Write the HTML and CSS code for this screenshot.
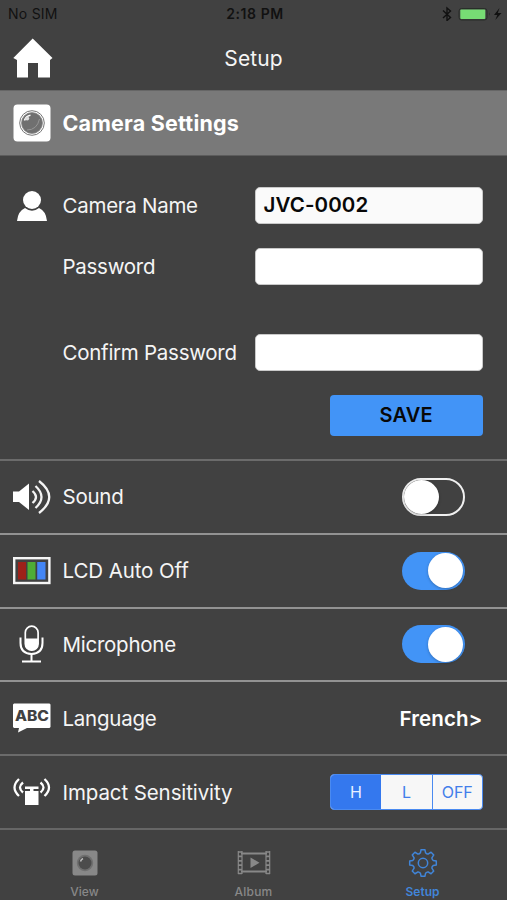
FILE: index.html
```html
<!DOCTYPE html>
<html lang="en">
<head>
<meta charset="utf-8">
<title>Setup</title>
<link rel="stylesheet" href="styles.css">
</head>
<body>
<div class="app">
  <div class="status">
    <span class="carrier">No SIM</span>
    <span class="time">2:18 PM</span>
    <span class="indicators">
      <svg width="64" height="20" viewBox="0 0 64 20">
        <path d="M3 9.500 L10.500 16.500 L7 19.500 V7 L10.500 10 L3 17" fill="none" stroke="#111" stroke-width="1.400"/>
        <rect x="19" y="7.500" width="28" height="11.500" rx="2.500" fill="none" stroke="#292d29" stroke-width="1"/>
        <rect x="20.300" y="8.500" width="25" height="9.500" rx="1" fill="#77dc74"/>
        <path d="M49 11.500 q1.500 1.500 0 3z" fill="#292929"/>
        <path d="M59.500 7 L54 14 h3.300 L55.300 19 L61.500 12 h-3.700z" fill="#111"/>
      </svg>
    </span>
  </div>
  <header class="nav">
    <svg class="home" width="40" height="40" viewBox="0 0 40 40"><path d="M19.700 .5 L39.500 20 L37 22 V39.500 H25 V25 H15 V39.500 H4 V22 L.3 20z" fill="#fff"/></svg>
    <h1>Setup</h1>
  </header>
  <div class="section">
    <svg class="icon" width="38" height="38" viewBox="0 0 38 38">
      <rect x=".5" y=".5" width="37" height="37" rx="4" fill="#fff"/>
      <circle cx="19" cy="19" r="12.300" fill="none" stroke="#777" stroke-width="1"/>
      <circle cx="19" cy="19" r="10.500" fill="#707070" stroke="#888" stroke-width=".7"/>
      <path d="M11.500 16.500 Q13 12 17.500 11.300" fill="none" stroke="#fff" stroke-width="1.600"/>
      <circle cx="14.200" cy="14.500" r="2" fill="#ddd"/>
      <path d="M14 26 Q24 26 26.500 15" fill="none" stroke="#969696" stroke-width="1"/>
    </svg>
    <h2>Camera Settings</h2>
  </div>
  <form class="camera">
    <div class="field name">
      <svg class="icon" width="38" height="32" viewBox="0 0 38 32"><circle cx="19" cy="10" r="9" fill="#fff"/><path d="M4 31 Q5 21 12 18 Q19 23.500 26 18 Q33 21 34 31z" fill="#fff"/></svg>
      <label>Camera Name</label><span class="input filled">JVC-0002</span>
    </div>
    <div class="field password"><label>Password</label><span class="input"></span></div>
    <div class="field confirm"><label>Confirm Password</label><span class="input"></span></div>
    <button type="button" class="save">SAVE</button>
  </form>
  <div class="row dim">
    <svg class="icon" width="38" height="36" viewBox="0 0 38 36"><path d="M0 12.500 H6 L16 4.500 V31 L6 23 H0z" fill="#fff"/><g fill="none" stroke="#f4f4f4" stroke-width="2.300"><path d="M19.500 12 Q26.500 18 19.500 24"/><path d="M22.500 7 Q34.500 18 22.500 29"/><path d="M26 2 Q46.500 18 26 34"/></g></svg>
    <span class="label sound">Sound</span><span class="switch off"></span>
  </div>
  <div class="row">
    <svg class="icon" width="38" height="28" viewBox="0 0 38 28"><rect x="1.200" y="1.200" width="35.200" height="24.800" fill="#414141" stroke="#f5f5f5" stroke-width="2.400"/><path d="M5 5h8v17.500H5z" fill="#9d2119"/><path d="M14.500 5h8v17.500h-8z" fill="#4ead35"/><path d="M24.200 5h8.300v17.500h-8.300z" fill="#4285f5"/></svg>
    <span class="label lcd">LCD Auto Off</span><span class="switch"></span>
  </div>
  <div class="row">
    <svg class="icon" width="38" height="38" viewBox="0 0 38 38"><g fill="none" stroke="#fff" stroke-width="2"><path d="M7.500 12.500 V18 Q7.500 28.500 18.500 29 Q29.500 28.500 29.500 18 V12.500"/><path d="M18.500 29v7M9 36.400h19"/><rect x="12.300" y="1.200" width="12.800" height="24" rx="6.400" stroke-width="1.700"/></g><path d="M12 13.500h13.400v5.300a6.700 6.700 0 0 1-13.400 0z" fill="#fff"/></svg>
    <span class="label mic">Microphone</span><span class="switch"></span>
  </div>
  <div class="row">
    <svg class="icon" width="38" height="30" viewBox="0 0 38 30"><path d="M1 .5H36.500L37.500 1.500V24L36.500 25H14L5 29.500 6 25H1L0 24V1.500z" fill="#fff"/><text x="18.900" y="18" text-anchor="middle" textLength="34" lengthAdjust="spacingAndGlyphs" class="abc">ABC</text></svg>
    <span class="label language">Language</span><span class="value">French&gt;</span>
  </div>
  <div class="row dim">
    <svg class="icon" width="38" height="28" viewBox="0 0 38 28"><g fill="none" stroke="#fff" stroke-width="2.300"><path d="M6 1 Q-3 9.500 6 18M10 4.500 Q4 9.500 10 14.500M31.500 1 Q40.500 9.500 31.500 18M27.500 4.500 Q33.500 9.500 27.500 14.500"/></g><path d="M12 8.500H25.500v2.500h-5V13h5v14H12V13h5v-2h-5z" fill="#fff"/></svg>
    <span class="label impact">Impact Sensitivity</span>
    <span class="segments"><span class="on">H</span><span>L</span><span>OFF</span></span>
  </div>
  <nav class="tabs">
    <span class="tab">
      <svg width="28" height="28" viewBox="0 0 28 28"><rect x="1.500" y="1.500" width="25" height="25" rx="2.500" fill="#888"/><circle cx="14" cy="14" r="8.200" fill="#707070"/><circle cx="14" cy="14" r="6.500" fill="#4c4c4c"/><path d="M9.500 12.500 Q10 10.500 12 9.500" fill="none" stroke="#bbb" stroke-width="1.500"/></svg>
      <span class="view">View</span></span>
    <span class="tab">
      <svg width="34" height="28" viewBox="0 0 34 28"><g fill="none" stroke="#888"><path d="M4 4.500h26M4 22.500h26" stroke-width="2"/><path d="M1.300 2v23M32.700 2v23M5 2v23M29 2v23" stroke-width="1.200"/><path d="M1 3h4M1 7.400h4M1 11.800h4M1 16.200h4M1 20.600h4M1 24.500h4M29 3h4M29 7.400h4M29 11.800h4M29 16.200h4M29 20.600h4M29 24.500h4" stroke-width="1.700"/></g><path d="M13.500 8.500L22.500 13.700 13.500 19z" fill="#888"/></svg>
      <span class="album">Album</span></span>
    <span class="tab active">
      <svg width="30" height="28" viewBox="-15 -14 30 28"><g fill="none" stroke="#4185d8" stroke-width="1.500" stroke-linejoin="round"><path d="M-2.600-10.200L-1.900-13.300H1.900L2.600-10.200Q4-8.500 5.400-9.050L8.060-10.750 10.750-8.060 9.050-5.400Q8.500-4 10.200-2.600L13.300-1.900V1.900L10.200 2.600Q8.500 4 9.050 5.400L10.750 8.060 8.060 10.750 5.400 9.050Q4 8.500 2.600 10.200L1.900 13.300H-1.900L-2.600 10.200Q-4 8.500-5.400 9.050L-8.060 10.750-10.750 8.060-9.050 5.400Q-8.500 4-10.200 2.600L-13.300 1.900V-1.900L-10.200-2.600Q-8.500-4-9.050-5.400L-10.750-8.060-8.060-10.750-5.400-9.050Q-4-8.500-2.600-10.200z"/><circle r="4.700"/></g></svg>
      <span class="setup">Setup</span></span>
  </nav>
</div>
</body>
</html>
```

FILE: styles.css
```css
* { box-sizing: border-box; }
body { margin: 0; background: #414141; color: #f5f5f5; font-family: Inter, "Liberation Sans", sans-serif; }
.app { width: 507px; height: 900px; overflow: hidden; display: flex; flex-direction: column; background: #414141; }
.app > * { flex-shrink: 0; }
svg { display: block; flex-shrink: 0; }

.status { height: 27px; display: grid; grid-template-columns: 1fr auto 1fr; padding: 0 3px 0 8px; align-items: center; color: #111; font-size: 14px; line-height: 27px; }
.carrier { letter-spacing: .25px; }
.time { font-weight: 600; letter-spacing: .6px; margin-left: -2px; }
.indicators { justify-self: end; height: 20px; margin-top: -6px; }

.nav { height: 63px; display: grid; grid-template-columns: 40px 1fr 40px; padding: 0 13px; }
.home { margin-top: 11px; }
h1, h2 { margin: 0; }
h1 { text-align: center; font-size: 21px; line-height: 63px; font-weight: 400; letter-spacing: .1px; }

.section { height: 66px; display: flex; align-items: center; padding-left: 12.500px; background: #797979; border-top: 1px solid #666; border-bottom: 1px solid #5c5c5c; }
h2 { margin-left: 12px; font-size: 21.500px; font-weight: 700; letter-spacing: .2px; color: #fff; }
.icon { margin-right: 12px; }
.section .icon { margin-right: 0; }

.camera { height: 303px; padding: 31px 24.500px 0 0; display: flex; flex-direction: column; }
.field { height: 37px; display: flex; align-items: center; padding-left: 62.500px; font-size: 20.500px; }
.field label { letter-spacing: -.27px; }
.field.name { padding-left: 12.500px; }
.password { margin-top: 24px; }
.confirm { margin-top: 49px; }
.input { width: 228px; height: 37px; margin-left: auto; border-radius: 5px; background: #fff; border: 1px solid #c9c9c9; }
.filled { background: #fafafa; color: #080808; font-weight: 600; font-size: 20.500px; line-height: 34px; padding-left: 8px; letter-spacing: .1px; }
.save { align-self: flex-end; width: 152.500px; height: 41px; margin-top: 23.500px; padding: 0; border: 0; border-radius: 4px; background: #4294f7; color: #080808; font: 600 20px Inter, sans-serif; letter-spacing: .2px; }

.row { height: 73.800px; display: flex; align-items: center; padding: 0 24.500px 0 12.500px; border-top: 2px solid #929292; }
.row.dim { border-top-color: #6b6b6b; }
.label { font-size: 20.500px; letter-spacing: -.25px; }
.lcd, .impact { letter-spacing: -.1px; }
.switch { width: 63px; height: 38px; margin: 0 18px 0 auto; padding: 1.500px; display: flex; justify-content: flex-end; border-radius: 19px; background: #4294f7; }
.switch::before { content: ""; width: 35px; height: 35px; border-radius: 50%; background: #fff; box-shadow: 0 1px 3px rgba(0, 0, 0, .25); }
.switch.off { justify-content: flex-start; padding: 0; background: transparent; border: 2px solid #f0f0f0; }
.switch.off::before { height: 34px; }
.value { margin-left: auto; font-size: 20.500px; font-weight: 600; letter-spacing: .1px; color: #fff; }
.abc { font: 800 14px Inter, sans-serif; fill: #414141; }
.segments { width: 152.500px; height: 36px; margin-left: auto; display: grid; grid-template-columns: 50px 51px 1fr; border: 1px solid #4a8af0; border-radius: 4px; overflow: hidden; background: #f7f7f7; color: #427eea; font-size: 16px; line-height: 34px; text-align: center; }
.segments span + span + span { border-left: 1px solid #4a8af0; }
.segments .on { background: #3478ee; color: #e7f0ff; }

.tabs { flex: 1 0 0; display: grid; grid-template-columns: repeat(3, 1fr); border-top: 2px solid #666; padding-top: 19.500px; }
.tab { display: flex; flex-direction: column; align-items: center; gap: 7.500px; font-size: 12px; line-height: 14px; font-weight: 500; color: #888; }
.album { letter-spacing: .2px; }
.tab.active { color: #4185d8; }
.setup { font-weight: 600; }
```
